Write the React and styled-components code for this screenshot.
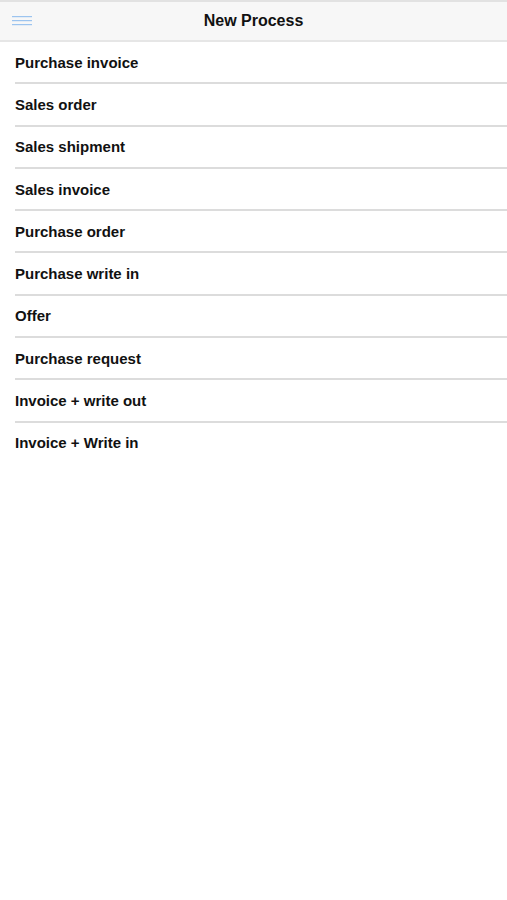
import React from "react";
import styled, { createGlobalStyle } from "styled-components";

const GlobalStyle = createGlobalStyle`
  html, body {
    margin: 0;
    padding: 0;
    background: #ffffff;
    font-family: "Liberation Sans", Arial, Helvetica, sans-serif;
  }
`;

const processes = [
  "Purchase invoice",
  "Sales order",
  "Sales shipment",
  "Sales invoice",
  "Purchase order",
  "Purchase write in",
  "Offer",
  "Purchase request",
  "Invoice + write out",
  "Invoice + Write in",
];

export default function App() {
  return (
    <>
      <GlobalStyle />
      <Page>
        <Header>
          <MenuButton aria-label="menu">
            <svg width="20" height="10" viewBox="0 0 20 10">
              <rect x="0" y="0" width="20" height="1.2" fill="#9cc4ef" />
              <rect x="0" y="4" width="20" height="1.2" fill="#9cc4ef" />
              <rect x="0" y="8" width="20" height="1.2" fill="#9cc4ef" />
            </svg>
          </MenuButton>
          <Title>New Process</Title>
        </Header>
        <List>
          {processes.map((name, index) => (
            <Row key={name} last={index === processes.length - 1}>
              <Label>{name}</Label>
            </Row>
          ))}
        </List>
      </Page>
    </>
  );
}

const Page = styled.div`
  width: 507px;
  min-height: 900px;
  background: #ffffff;
`;

const Header = styled.div`
  height: 38px;
  border-top: 2px solid #e2e2e2;
  border-bottom: 2px solid #e6e6e6;
  background: #f7f7f7;
  display: flex;
  align-items: center;
  justify-content: center;
  position: relative;
`;

const MenuButton = styled.div`
  position: absolute;
  left: 12px;
  top: 14px;
  display: flex;
`;

const Title = styled.h1`
  margin: 0;
  font-size: 16px;
  font-weight: bold;
  color: #111111;
`;

const List = styled.div`
  display: flex;
  flex-direction: column;
`;

const Row = styled.div`
  height: 40.3px;
  margin-left: 15px;
  display: flex;
  align-items: center;
  border-bottom: 2px solid ${(p) => (p.last ? "transparent" : "#dcdcdc")};
`;

const Label = styled.span`
  font-size: 15px;
  font-weight: bold;
  color: #111111;
`;
